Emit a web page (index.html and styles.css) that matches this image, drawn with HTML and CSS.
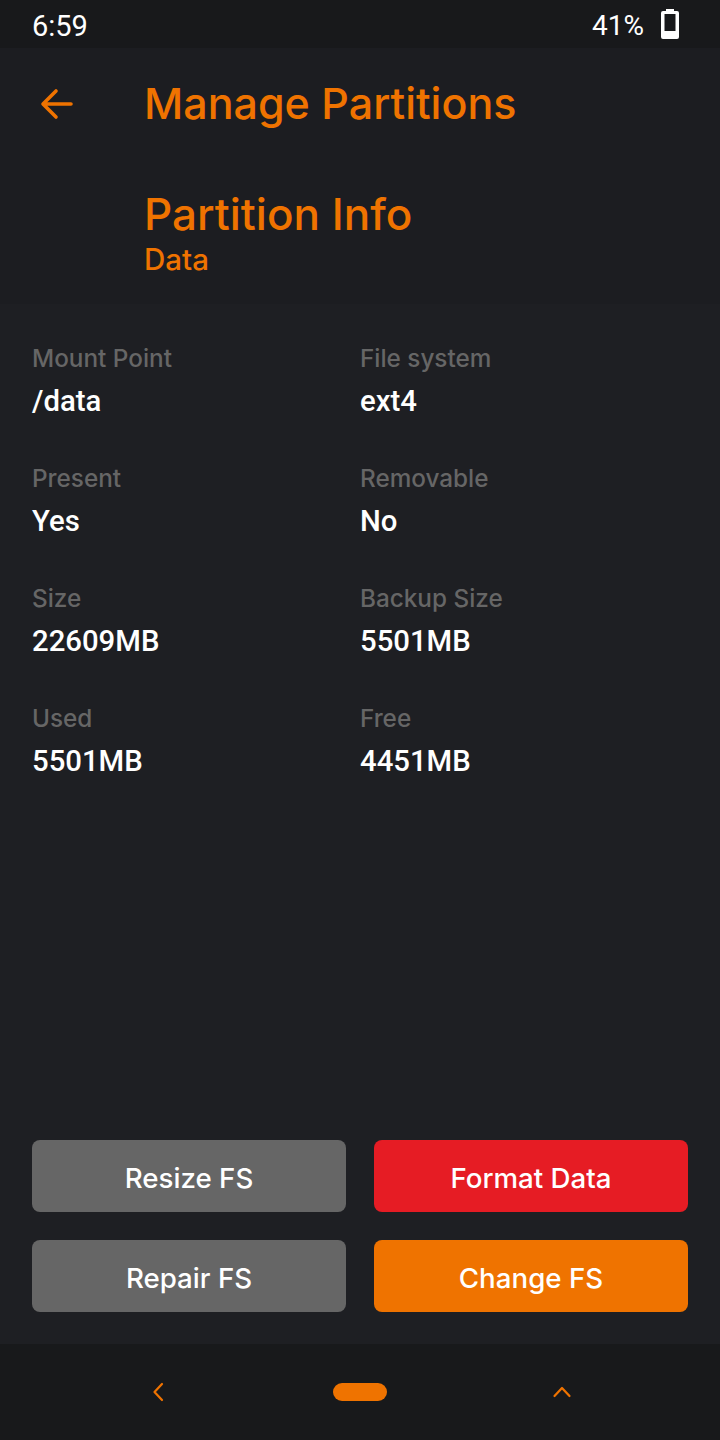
FILE: index.html
```html
<!DOCTYPE html>
<html lang="en">
<head>
    <meta charset="UTF-8">
    <meta name="viewport" content="width=device-width, initial-scale=1.0">
    <title>Manage Partitions</title>
    <link rel="stylesheet" href="styles.css">
</head>
<body>
    <div class="screen">
        <div class="status-bar">
            <span class="clock">6:59</span>
            <div class="status-right">
                <span class="battery-level">41%</span>
                <svg class="battery" width="18" height="30" viewBox="0 0 18 30">
                    <path fill="#fff" fill-rule="evenodd" d="M5 0h8v2h3a2 2 0 0 1 2 2v24a2 2 0 0 1-2 2H2a2 2 0 0 1-2-2V4a2 2 0 0 1 2-2h3zM3.500 5v17h11V5z"/>
                </svg>
            </div>
        </div>

        <div class="header">
            <div class="title-row">
                <svg class="back-arrow" width="36" height="36" viewBox="0 0 36 36">
                    <path d="M33 18H6M18 5 5 18l13 13" fill="none" stroke="#ef7300" stroke-width="3.6" stroke-linecap="round" stroke-linejoin="round"/>
                </svg>
                <h1 class="title">Manage Partitions</h1>
            </div>
            <div class="subtitle">Partition Info</div>
            <div class="sub-subtitle">Data</div>
        </div>

        <div class="content">
            <div class="info-grid">
                <div class="info-item">
                    <div class="info-label">Mount Point</div>
                    <div class="info-value">/data</div>
                </div>
                <div class="info-item">
                    <div class="info-label">File system</div>
                    <div class="info-value">ext4</div>
                </div>
                <div class="info-item">
                    <div class="info-label">Present</div>
                    <div class="info-value">Yes</div>
                </div>
                <div class="info-item">
                    <div class="info-label">Removable</div>
                    <div class="info-value">No</div>
                </div>
                <div class="info-item">
                    <div class="info-label">Size</div>
                    <div class="info-value">22609MB</div>
                </div>
                <div class="info-item">
                    <div class="info-label">Backup Size</div>
                    <div class="info-value">5501MB</div>
                </div>
                <div class="info-item">
                    <div class="info-label">Used</div>
                    <div class="info-value">5501MB</div>
                </div>
                <div class="info-item">
                    <div class="info-label">Free</div>
                    <div class="info-value">4451MB</div>
                </div>
            </div>

            <div class="actions">
                <button class="action gray">Resize FS</button>
                <button class="action red">Format Data</button>
                <button class="action gray">Repair FS</button>
                <button class="action orange">Change FS</button>
            </div>
        </div>

        <div class="nav-bar">
            <svg width="20" height="20" viewBox="0 0 20 20">
                <path d="M14 2 6.500 10l7.500 8" fill="none" stroke="#ef7300" stroke-width="2.200" stroke-linecap="round" stroke-linejoin="round"/>
            </svg>
            <div class="home-pill"></div>
            <svg width="20" height="14" viewBox="0 0 20 14">
                <path d="M2.500 11 10 3l7.500 8" fill="none" stroke="#ef7300" stroke-width="2.200" stroke-linecap="round" stroke-linejoin="round"/>
            </svg>
        </div>
    </div>
</body>
</html>
```

FILE: styles.css
```css
* {
    margin: 0;
    padding: 0;
    box-sizing: border-box;
}

body {
    width: 720px;
    height: 1440px;
    overflow: hidden;
    background-color: #1e1f23;
    font-family: 'Roboto', sans-serif;
}

.screen {
    height: 100%;
    display: flex;
    flex-direction: column;
}

/* Status bar */
.status-bar {
    height: 48px;
    flex-shrink: 0;
    padding: 3px 32px 0;
    display: flex;
    justify-content: space-between;
    align-items: center;
    background-color: #18191b;
    color: #fff;
    font-size: 28px;
}

.clock {
    font-size: 29px;
}

.status-right {
    display: flex;
    align-items: center;
    gap: 17px;
}

.battery {
    margin: 0 9px 3px 0;
}

/* Header */
.header {
    height: 256px;
    flex-shrink: 0;
    background-color: #1c1d21;
    color: #ef7300;
    font-family: 'Inter', sans-serif;
    padding-left: 144px;
    position: relative;
}

.title-row {
    height: 110px;
    display: flex;
    align-items: center;
}

.back-arrow {
    position: absolute;
    left: 38px;
    top: 38px;
}

.title {
    font-size: 43px;
    font-weight: 500;
}

.subtitle {
    font-size: 44px;
    font-weight: 500;
    line-height: 52px;
    margin-top: 30px;
}

.sub-subtitle {
    font-size: 29.500px;
    font-weight: 500;
    line-height: 39px;
}

/* Partition details */
.content {
    flex: 1;
    padding: 34px 32px 32px;
    display: flex;
    flex-direction: column;
    justify-content: space-between;
}

.info-grid {
    display: grid;
    grid-template-columns: 328px 1fr;
    row-gap: 34px;
}

.info-label {
    font-family: 'Inter', sans-serif;
    font-size: 24.300px;
    font-weight: 500;
    line-height: 40px;
    color: #666;
}

.info-value {
    font-size: 29.300px;
    font-weight: 500;
    line-height: 46px;
    color: #fff;
}

.actions {
    display: grid;
    grid-template-columns: 314px 314px;
    column-gap: 28px;
    row-gap: 28px;
}

.action {
    height: 72px;
    padding-top: 3px;
    border: none;
    border-radius: 8px;
    color: #fff;
    font-family: 'Inter', sans-serif;
    font-size: 27.700px;
    font-weight: 500;
}

.gray {
    background-color: #666;
}

.red {
    background-color: #e61c24;
}

.orange {
    background-color: #ef7300;
}

/* Navigation bar */
.nav-bar {
    height: 96px;
    flex-shrink: 0;
    background-color: #18191b;
    display: flex;
    align-items: center;
    justify-content: center;
    gap: 165px;
}

.home-pill {
    width: 54px;
    height: 18px;
    border-radius: 9px;
    background-color: #ef7300;
}
```
